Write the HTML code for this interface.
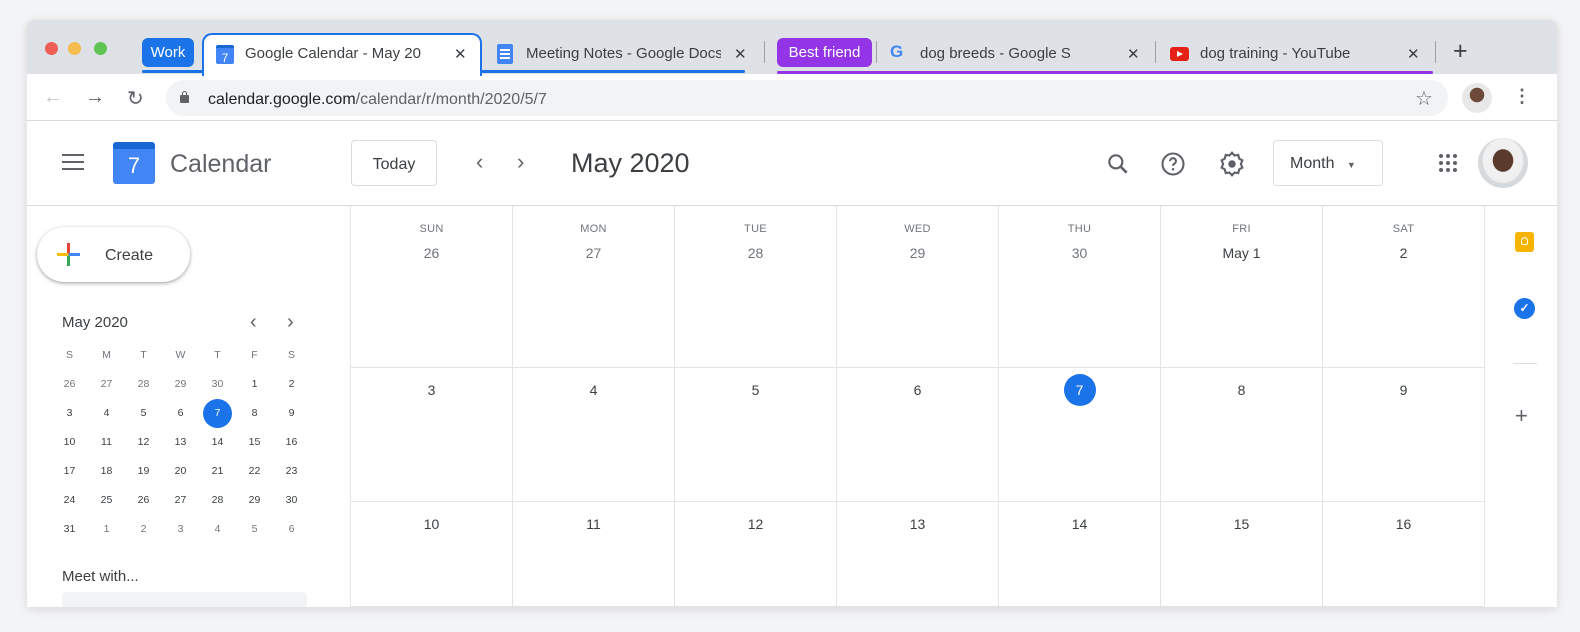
<!DOCTYPE html>
<html><head><meta charset="utf-8"><style>
*{margin:0;padding:0;box-sizing:border-box}
body{width:1580px;height:632px;background:#f3f4f6;font-family:"Liberation Sans",Arial,sans-serif;position:relative;overflow:hidden;color:#3c4043}
.a{position:absolute}
.win{left:27px;top:20px;width:1530px;height:587px;background:#fff;box-shadow:0 2px 10px rgba(0,0,0,.12);overflow:hidden;border-radius:6px 6px 0 0}
.tabs{left:0;top:0;width:1530px;height:54px;background:#dee1e6}
.dot{width:13px;height:13px;border-radius:50%;top:22px}
.tabtxt{font-size:15px;color:#3c4043;top:25px;white-space:nowrap}
.x{font-size:15px;color:#3c4043;top:25px}
.sep{width:1px;height:22px;background:#9aa0a6;top:21px}
.cell{border-right:1px solid #e3e4e7;border-bottom:1px solid #e3e4e7;text-align:center}
.dn{font-size:11px;color:#70757a;margin-top:17px;letter-spacing:.3px}
.dd{font-size:14px;color:#3c4043;margin-top:10px}
.mini{font-size:10.5px;color:#3c4043;text-align:center;width:37px}
</style></head><body>
<div class="a win">
 <div class="a tabs">
  <div class="a dot" style="left:18px;background:#ed5f57"></div>
  <div class="a dot" style="left:41px;background:#f5bd4f"></div>
  <div class="a dot" style="left:67px;background:#5fc453"></div>
  <div class="a" style="left:115px;top:18px;width:52px;height:29px;background:#1a73e8;border-radius:6px;color:#fff;font-size:15px;line-height:29px;text-align:center">Work</div>
  <div class="a" style="left:115px;top:50px;width:603px;height:3px;background:#1a73e8;border-radius:2px"></div>
  <div class="a" style="left:175px;top:13px;width:280px;height:43px;background:#fff;border:2px solid #1a73e8;border-bottom:none;border-radius:10px 10px 0 0"></div>
  <div class="a" style="left:189px;top:25px;width:18px;height:19px;background:#4285f4;border-radius:2px;color:#fff;font-size:12px;text-align:center;line-height:21px;border-top:3px solid #1967d2">7</div>
  <div class="a tabtxt" style="left:218px">Google Calendar - May 20</div>
  <div class="a x" style="left:427px">✕</div>
  <div class="a" style="left:470px;top:24px;width:16px;height:20px;background:#4285f4;border-radius:2px"><div style="margin:5px 3px;height:2px;background:#fff;box-shadow:0 4px 0 #fff,0 8px 0 #fff"></div></div>
  <div class="a tabtxt" style="left:499px;width:195px;overflow:hidden">Meeting Notes - Google Docs</div>
  <div class="a x" style="left:707px">✕</div>
  <div class="a sep" style="left:737px"></div>
  <div class="a" style="left:750px;top:18px;width:95px;height:29px;background:#9334e6;border-radius:6px;color:#fff;font-size:15px;line-height:29px;text-align:center">Best friend</div>
  <div class="a" style="left:750px;top:51px;width:656px;height:3px;background:#9334e6;border-radius:2px"></div>
  <div class="a sep" style="left:849px"></div>
  <div class="a" style="left:863px;top:22px;font-size:17px;font-weight:bold;color:#4285f4">G</div>
  <div class="a tabtxt" style="left:893px;width:150px;overflow:hidden">dog breeds - Google Search</div>
  <div class="a x" style="left:1100px">✕</div>
  <div class="a sep" style="left:1128px"></div>
  <div class="a" style="left:1143px;top:27px;width:19px;height:14px;background:#e62117;border-radius:3px"><div style="margin:4px 0 0 7px;width:0;height:0;border-left:6px solid #fff;border-top:3px solid transparent;border-bottom:3px solid transparent"></div></div>
  <div class="a tabtxt" style="left:1173px">dog training - YouTube</div>
  <div class="a x" style="left:1380px">✕</div>
  <div class="a sep" style="left:1408px"></div>
  <div class="a" style="left:1426px;top:17px;font-size:25px;color:#3c4043">+</div>
 </div>
 <div class="a" style="left:0;top:54px;width:1530px;height:47px;border-bottom:1px solid #dadce0"></div>
 <div class="a" style="left:16px;top:66px;font-size:20px;color:#c4c7ca">←</div>
 <div class="a" style="left:58px;top:66px;font-size:20px;color:#5f6368">→</div>
 <div class="a" style="left:100px;top:66px;font-size:20px;color:#5f6368">↻</div>
 <div class="a" style="left:139px;top:60px;width:1282px;height:36px;background:#f1f3f4;border-radius:18px"></div>
 <div class="a" style="left:153px;top:75px;width:9px;height:8px;background:#5f6368;border-radius:1px"></div>
 <div class="a" style="left:155px;top:71px;width:5px;height:6px;border:1.5px solid #5f6368;border-bottom:none;border-radius:3px 3px 0 0"></div>
 <div class="a" style="left:181px;top:71px;font-size:16px;color:#202124">calendar.google.com<span style="color:#5f6368">/calendar/r/month/2020/5/7</span></div>
 <div class="a" style="left:1388px;top:66px;font-size:20px;color:#5f6368">☆</div>
 <div class="a" style="left:1435px;top:63px;width:30px;height:30px;border-radius:50%;background:radial-gradient(circle at 50% 40%,#6b4a3a 0 30%,#e8e8e8 32%)"></div>
 <div class="a" style="left:1486px;top:66px;font-size:18px;color:#5f6368;font-weight:bold">⋮</div>
 <div class="a" style="left:0;top:185px;width:1530px;height:1px;background:#dadce0"></div>
 <div class="a" style="left:35px;top:134px;width:22px;height:2px;background:#5f6368;box-shadow:0 7px 0 #5f6368,0 14px 0 #5f6368"></div>
 <div class="a" style="left:86px;top:122px;width:42px;height:42px;background:#4285f4;border-radius:3px;border-top:7px solid #1967d2;color:#fff;font-size:22px;text-align:center;line-height:34px">7</div>
 <div class="a" style="left:143px;top:130px;font-size:25px;color:#5f6368">Calendar</div>
 <div class="a" style="left:324px;top:120px;width:86px;height:46px;border:1px solid #dadce0;border-radius:4px;font-size:16px;text-align:center;line-height:48px;color:#3c4043">Today</div>
 <div class="a" style="left:449px;top:129px;font-size:22px;color:#5f6368">‹</div>
 <div class="a" style="left:490px;top:129px;font-size:22px;color:#5f6368">›</div>
 <div class="a" style="left:544px;top:128px;font-size:27px;color:#3c4043">May 2020</div>
 <svg class="a" style="left:1078px;top:131px" width="26" height="26" viewBox="0 0 24 24"><circle cx="10" cy="10" r="6" fill="none" stroke="#5f6368" stroke-width="2"/><path d="M14.5 14.5L20 20" stroke="#5f6368" stroke-width="2.4"/></svg>
 <svg class="a" style="left:1132px;top:130px" width="28" height="28" viewBox="0 0 24 24"><circle cx="12" cy="12" r="9" fill="none" stroke="#5f6368" stroke-width="1.8"/><path d="M9.5 9.5a2.5 2.5 0 1 1 3.5 2.3c-.8.4-1 .9-1 1.7" fill="none" stroke="#5f6368" stroke-width="1.8"/><circle cx="12" cy="16.5" r="1.1" fill="#5f6368"/></svg>
 <svg class="a" style="left:1190px;top:129px" width="30" height="30" viewBox="0 0 24 24"><path d="M12 3l2 2.2 3-.5.7 2.9 2.6 1.5-1.2 2.9 1.2 2.9-2.6 1.5-.7 2.9-3-.5L12 21l-2-2.2-3 .5-.7-2.9-2.6-1.5L4.9 12 3.7 9.1l2.6-1.5L7 4.7l3 .5z" fill="none" stroke="#5f6368" stroke-width="1.7"/><circle cx="12" cy="12" r="3" fill="#5f6368"/></svg>
 <div class="a" style="left:1246px;top:120px;width:110px;height:46px;border:1px solid #dadce0;border-radius:4px;font-size:16px;line-height:46px;padding-left:16px;color:#3c4043">Month <span style="font-size:9px;color:#5f6368;margin-left:8px">▼</span></div>
 <div class="a" style="left:1412px;top:134px;width:4px;height:4px;background:#5f6368;border-radius:50%;box-shadow:7px 0 #5f6368,14px 0 #5f6368,0 7px #5f6368,7px 7px #5f6368,14px 7px #5f6368,0 14px #5f6368,7px 14px #5f6368,14px 14px #5f6368"></div>
 <div class="a" style="left:1451px;top:118px;width:50px;height:50px;border-radius:50%;background:radial-gradient(ellipse at 50% 45%,#5a3a2c 0 28%,#f0f0f0 30% 55%,#d6d9dc 60%)"></div>
 <div class="a" style="left:10px;top:207px;width:153px;height:55px;border-radius:28px;box-shadow:0 1px 3px rgba(0,0,0,.3),0 2px 6px rgba(0,0,0,.1);background:#fff"></div>
 <div class="a" style="left:40px;top:223px;width:3px;height:23px;background:linear-gradient(#ea4335 50%,#34a853 50%)"></div>
 <div class="a" style="left:30px;top:233px;width:23px;height:3px;background:linear-gradient(90deg,#fbbc04 50%,#4285f4 50%)"></div>
 <div class="a" style="left:78px;top:227px;font-size:16px;color:#3c4043">Create</div>
 <div class="a" style="left:35px;top:294px;font-size:15px;color:#3c4043">May 2020</div>
 <div class="a" style="left:223px;top:291px;font-size:20px;color:#5f6368">‹</div>
 <div class="a" style="left:260px;top:291px;font-size:20px;color:#5f6368">›</div>
 <div class="a" style="left:24px;top:329px">
  <div style="display:flex;font-size:9.5px;color:#70757a;height:29px"><div class="mini" style="color:#70757a">S</div><div class="mini" style="color:#70757a">M</div><div class="mini" style="color:#70757a">T</div><div class="mini" style="color:#70757a">W</div><div class="mini" style="color:#70757a">T</div><div class="mini" style="color:#70757a">F</div><div class="mini" style="color:#70757a">S</div></div>
  <div style="display:flex;height:29px"><div class="mini" style="color:#70757a">26</div><div class="mini" style="color:#70757a">27</div><div class="mini" style="color:#70757a">28</div><div class="mini" style="color:#70757a">29</div><div class="mini" style="color:#70757a">30</div><div class="mini">1</div><div class="mini">2</div></div>
  <div style="display:flex;height:29px"><div class="mini">3</div><div class="mini">4</div><div class="mini">5</div><div class="mini">6</div><div class="mini"><span style="display:inline-block;width:29px;height:29px;margin-top:-8px;border-radius:50%;background:#1a73e8;color:#fff;line-height:29px">7</span></div><div class="mini">8</div><div class="mini">9</div></div>
  <div style="display:flex;height:29px"><div class="mini">10</div><div class="mini">11</div><div class="mini">12</div><div class="mini">13</div><div class="mini">14</div><div class="mini">15</div><div class="mini">16</div></div>
  <div style="display:flex;height:29px"><div class="mini">17</div><div class="mini">18</div><div class="mini">19</div><div class="mini">20</div><div class="mini">21</div><div class="mini">22</div><div class="mini">23</div></div>
  <div style="display:flex;height:29px"><div class="mini">24</div><div class="mini">25</div><div class="mini">26</div><div class="mini">27</div><div class="mini">28</div><div class="mini">29</div><div class="mini">30</div></div>
  <div style="display:flex;height:29px"><div class="mini">31</div><div class="mini" style="color:#70757a">1</div><div class="mini" style="color:#70757a">2</div><div class="mini" style="color:#70757a">3</div><div class="mini" style="color:#70757a">4</div><div class="mini" style="color:#70757a">5</div><div class="mini" style="color:#70757a">6</div></div>
 </div>
 <div class="a" style="left:35px;top:548px;font-size:15px;color:#3c4043">Meet with...</div>
 <div class="a" style="left:35px;top:572px;width:245px;height:20px;background:#f1f3f4;border-radius:4px 4px 0 0"></div>
 <div class="a" style="left:323px;top:186px;width:1px;height:401px;background:#e3e4e7"></div>
 <div class="a" style="left:324px;top:186px;display:grid;grid-template-columns:repeat(7,162px);grid-template-rows:162px 134px 105px">
  <div class="cell"><div class="dn">SUN</div><div class="dd" style="color:#70757a">26</div></div>
  <div class="cell"><div class="dn">MON</div><div class="dd" style="color:#70757a">27</div></div>
  <div class="cell"><div class="dn">TUE</div><div class="dd" style="color:#70757a">28</div></div>
  <div class="cell"><div class="dn">WED</div><div class="dd" style="color:#70757a">29</div></div>
  <div class="cell"><div class="dn">THU</div><div class="dd" style="color:#70757a">30</div></div>
  <div class="cell"><div class="dn">FRI</div><div class="dd">May 1</div></div>
  <div class="cell"><div class="dn">SAT</div><div class="dd">2</div></div>
  <div class="cell"><div class="dd" style="margin-top:14px">3</div></div>
  <div class="cell"><div class="dd" style="margin-top:14px">4</div></div>
  <div class="cell"><div class="dd" style="margin-top:14px">5</div></div>
  <div class="cell"><div class="dd" style="margin-top:14px">6</div></div>
  <div class="cell"><div style="margin:6px auto 0;width:32px;height:32px;border-radius:50%;background:#1a73e8;color:#fff;font-size:14px;line-height:32px">7</div></div>
  <div class="cell"><div class="dd" style="margin-top:14px">8</div></div>
  <div class="cell"><div class="dd" style="margin-top:14px">9</div></div>
  <div class="cell"><div class="dd" style="margin-top:14px">10</div></div>
  <div class="cell"><div class="dd" style="margin-top:14px">11</div></div>
  <div class="cell"><div class="dd" style="margin-top:14px">12</div></div>
  <div class="cell"><div class="dd" style="margin-top:14px">13</div></div>
  <div class="cell"><div class="dd" style="margin-top:14px">14</div></div>
  <div class="cell"><div class="dd" style="margin-top:14px">15</div></div>
  <div class="cell"><div class="dd" style="margin-top:14px">16</div></div>
 </div>
 <div class="a" style="left:1488px;top:212px;width:19px;height:20px;background:#f6b400;border-radius:3px"><div style="margin:5px auto;width:7px;height:8px;border:1.5px solid #fff;border-radius:50% 50% 2px 2px"></div></div>
 <div class="a" style="left:1487px;top:278px;width:21px;height:21px;border-radius:50%;background:#1a73e8;color:#fff;font-size:12px;text-align:center;line-height:21px;font-weight:bold">✓</div>
 <div class="a" style="left:1486px;top:343px;width:24px;height:1px;background:#dadce0"></div>
 <div class="a" style="left:1488px;top:383px;font-size:22px;color:#5f6368">+</div>
</div>
</body></html>
